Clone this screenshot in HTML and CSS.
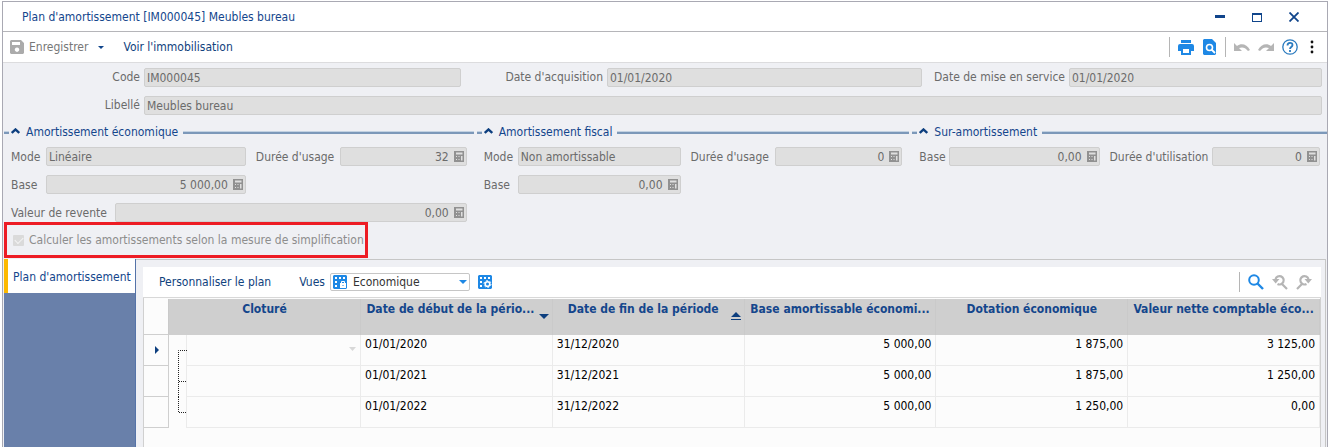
FILE: index.html
```html
<!DOCTYPE html>
<html lang="fr">
<head>
<meta charset="utf-8">
<title>Plan d'amortissement</title>
<link rel="stylesheet" href="styles.css">
</head>
<body>
<svg class="defs" width="0" height="0" aria-hidden="true">
  <symbol id="calc" viewBox="0 0 10 11">
    <path fill="#919191" fill-rule="evenodd" d="M0 0h10v11H0zM2 1.500v2h6.500v-2zM2 5v1h1V5zM4.500 5v1h1V5zM7 5v4.500h1.500V5zM2 8v1h1V8zM4.500 8v1h1V8z"/>
  </symbol>
  <symbol id="chev" viewBox="0 0 9 6">
    <path d="M.8 5 4.500 1.500 8.200 5" fill="none" stroke="#0d3f7f" stroke-width="2.400"/>
  </symbol>
</svg>
<div class="window">
  <header class="titlebar">
    <h1 class="title">Plan d'amortissement [IM000045] Meubles bureau</h1>
    <div class="winbtns">
      <button class="icon" aria-label="Réduire"><svg width="10" height="10"><path fill="#10458b" d="M0 3h10v3H0z"/></svg></button>
      <button class="icon" aria-label="Agrandir"><svg width="10" height="10"><path fill="#10458b" fill-rule="evenodd" d="M0 1h10v9H0zM1 3v6h8V3z"/></svg></button>
      <button class="icon" aria-label="Fermer"><svg width="10" height="10"><path stroke="#10458b" stroke-width="1.800" d="M.5.5l9 9M9.500.5l-9 9"/></svg></button>
    </div>
  </header>
  <nav class="toolbar">
    <button class="tool disabled">
      <svg width="14" height="14"><path fill="#ababab" fill-rule="evenodd" d="M1 0h10l3 3v10l-1 1H1l-1-1V1zM2 2v3h8V2zM7 7.500a2.200 2.200 0 1 0 .01 0z"/></svg>
      <span>Enregistrer</span>
      <svg class="drop" width="6" height="3"><path fill="#10458b" d="M0 0h6L3 3z"/></svg>
    </button>
    <button class="tool link">Voir l'immobilisation</button>
    <div class="tools">
      <span class="sep"></span>
      <button class="icon" aria-label="Imprimer"><svg width="16" height="15"><path fill="#1e88e5" fill-rule="evenodd" d="M3 0h10v3H3zM2 4h12q2 0 2 2v5h-3v4H3v-4H0V6q0-2 2-2zM5 9v4h6V9z"/></svg></button>
      <button class="icon" aria-label="Aperçu"><svg width="13" height="16"><path fill="#1e88e5" d="M1 0h8l4 4v11l-1 1H1l-1-1V1z"/><circle cx="6.500" cy="8.500" r="3" fill="none" stroke="#fff" stroke-width="1.600"/><path stroke="#fff" stroke-width="1.800" d="M8.500 10.500l3.500 3.500"/></svg></button>
      <span class="sep"></span>
      <button class="icon" aria-label="Annuler"><svg width="16" height="9"><path fill="#b5b5b5" d="M0 0l3 3C7 0 13 1 16 7l-2 1C11 4 8 4 5 5l3 3H0z"/></svg></button>
      <button class="icon" aria-label="Rétablir"><svg width="16" height="9"><path fill="#b5b5b5" d="M16 0l-3 3C9 0 3 1 0 7l2 1C5 4 8 4 11 5L8 8h8z"/></svg></button>
      <button class="icon" aria-label="Aide"><svg width="16" height="16" fill="none" stroke="#2b7bbf"><circle cx="8" cy="8" r="7.200" stroke-width="1.300"/><path stroke-width="1.800" d="M5.500 6.500C5.500 3 10.500 3 10.500 6c0 2-2.500 2-2.500 4M8 11v2"/></svg></button>
      <button class="icon" aria-label="Plus"><svg width="4" height="14"><circle cx="2" cy="2" r="1.400" fill="#111"/><circle cx="2" cy="7" r="1.400" fill="#111"/><circle cx="2" cy="12" r="1.400" fill="#111"/></svg></button>
    </div>
  </nav>
  <main class="form">
    <div class="ident">
      <label for="code">Code</label><div class="field"><input id="code" value="IM000045" disabled></div>
      <label for="acq">Date d'acquisition</label><div class="field"><input id="acq" value="01/01/2020" disabled></div>
      <label for="serv">Date de mise en service</label><div class="field"><input id="serv" value="01/01/2020" disabled></div>
      <label for="lib">Libellé</label><div class="field wide"><input id="lib" value="Meubles bureau" disabled></div>
    </div>
    <div class="groups">
      <section class="group">
        <h2 class="legend"><svg width="9" height="6"><use href="#chev"/></svg>Amortissement économique</h2>
        <div class="fields eco">
          <label for="m1">Mode</label><div class="field"><input id="m1" value="Linéaire" disabled></div>
          <label for="d1">Durée d'usage</label><div class="field"><input class="num" id="d1" value="32" disabled><svg width="10" height="11"><use href="#calc"/></svg></div>
          <label for="b1">Base</label><div class="field"><input class="num" id="b1" value="5 000,00" disabled><svg width="10" height="11"><use href="#calc"/></svg></div>
        </div>
        <div class="resale">
          <label for="v1">Valeur de revente</label><div class="field"><input class="num" id="v1" value="0,00" disabled><svg width="10" height="11"><use href="#calc"/></svg></div>
        </div>
      </section>
      <section class="group">
        <h2 class="legend"><svg width="9" height="6"><use href="#chev"/></svg>Amortissement fiscal</h2>
        <div class="fields fisc">
          <label for="m2">Mode</label><div class="field"><input id="m2" value="Non amortissable" disabled></div>
          <label for="d2">Durée d'usage</label><div class="field"><input class="num" id="d2" value="0" disabled><svg width="10" height="11"><use href="#calc"/></svg></div>
          <label for="b2">Base</label><div class="field"><input class="num" id="b2" value="0,00" disabled><svg width="10" height="11"><use href="#calc"/></svg></div>
        </div>
      </section>
      <section class="group">
        <h2 class="legend"><svg width="9" height="6"><use href="#chev"/></svg>Sur-amortissement</h2>
        <div class="fields sur">
          <label for="b3">Base</label><div class="field"><input class="num" id="b3" value="0,00" disabled><svg width="10" height="11"><use href="#calc"/></svg></div>
          <label for="d3">Durée d'utilisation</label><div class="field"><input class="num" id="d3" value="0" disabled><svg width="10" height="11"><use href="#calc"/></svg></div>
        </div>
      </section>
    </div>
    <label class="simplify"><input type="checkbox" checked disabled>Calculer les amortissements selon la mesure de simplification</label>
  </main>
  <div class="lower">
    <aside class="tabs"><button class="tab">Plan d'amortissement</button></aside>
    <section class="plan">
      <div class="planbar">
        <button class="tool link">Personnaliser le plan</button>
        <label class="views" for="vues">Vues</label>
        <div class="combo">
          <svg width="14" height="14"><path fill="#1e88e5" d="M1 0h12l1 1v12l-1 1H1l-1-1V1z"/><path fill="#fff" d="M2 2h2v2H2zM6 2h2v2H6zM10 2h2v2h-2zM2 6h2v2H2zM2 10h2v2H2z"/><path fill="#fff" d="M7 8h6v5H7z"/><path fill="none" stroke="#fff" d="M8.500 8V6.500h3V8"/><path fill="#1e88e5" d="M9.500 10h1v1h-1z"/></svg>
          <select id="vues"><option>Economique</option></select>
          <svg width="8" height="4"><path fill="#1e88e5" d="M0 0h8L4 4z"/></svg>
        </div>
        <button class="icon" aria-label="Configurer la vue"><svg width="14" height="14"><path fill="#1e88e5" d="M1 0h12l1 1v12l-1 1H1l-1-1V1z"/><path fill="#fff" d="M2 2h2v2H2zM6 2h2v2H6zM10 2h2v2h-2zM2 6h2v2H2zM2 10h2v2H2z"/><circle cx="9.500" cy="9" r="2.300" fill="none" stroke="#fff" stroke-width="1.600"/><circle cx="9.500" cy="9" r="3.500" fill="none" stroke="#fff" stroke-dasharray="1.800 1.870"/></svg></button>
        <div class="search">
          <span class="sep"></span>
          <button class="icon" aria-label="Rechercher"><svg width="16" height="16" fill="none" stroke="#1e88e5" stroke-width="2"><circle cx="6" cy="6" r="4.800"/><path stroke-width="2.400" d="M9.500 9.500l5.500 5.500"/></svg></button>
          <button class="icon" aria-label="Précédent"><svg width="16" height="16" fill="none" stroke="#b5b5b5" stroke-width="2.200"><path d="M3.500 5a4.200 4.200 0 1 1 2 5M10 10l5 5"/><path fill="#b5b5b5" stroke="none" d="M0 5h7.500L3.700 9.500z"/></svg></button>
          <button class="icon" aria-label="Suivant"><svg width="16" height="16" fill="none" stroke="#b5b5b5" stroke-width="2.200"><path d="M12.500 5a4.200 4.200 0 1 0-2 5M6 10l-5 5"/><path fill="#b5b5b5" stroke="none" d="M16 5H8.500l3.800 4.500z"/></svg></button>
        </div>
      </div>
      <div class="gridbox">
        <table class="grid">
          <colgroup><col class="c-sel"><col class="c-tree"><col class="c-clo"><col><col><col><col><col></colgroup>
          <thead><tr>
            <th class="corner"></th><th colspan="2">Cloturé</th>
            <th class="sort">Date de début de la pério...<svg width="10" height="8"><path fill="#0d3f7f" d="M0 2h10L5 7z"/></svg></th>
            <th class="sort asc">Date de fin de la période<svg width="10" height="8"><path fill="#0d3f7f" d="M0 5l5-5 5 5zM0 7h10v1H0z"/></svg></th>
            <th>Base amortissable économi...</th><th>Dotation économique</th><th>Valeur nette comptable éco...</th>
          </tr></thead>
          <tbody>
            <tr><td class="sel"><svg width="4" height="8"><path fill="#0d3f7f" d="M0 0l4 4-4 4z"/></svg></td>
              <td class="tree"><svg width="18" height="31"><path fill="none" stroke="#222" stroke-dasharray="1 1" d="M18 15.500H9.500V31"/></svg></td>
              <td class="clo"><svg width="7" height="4"><path fill="#d8d8d8" d="M0 0h7L3.500 4z"/></svg></td>
              <td>01/01/2020</td><td>31/12/2020</td><td class="r">5 000,00</td><td class="r">1 875,00</td><td class="r">3 125,00</td></tr>
            <tr><td class="sel"></td>
              <td class="tree"><svg width="18" height="31"><path fill="none" stroke="#222" stroke-dasharray="1 1" d="M9.500 0V31M10 15.500H18"/></svg></td>
              <td></td>
              <td>01/01/2021</td><td>31/12/2021</td><td class="r">5 000,00</td><td class="r">1 875,00</td><td class="r">1 250,00</td></tr>
            <tr><td class="sel"></td>
              <td class="tree"><svg width="18" height="31"><path fill="none" stroke="#222" stroke-dasharray="1 1" d="M9.500 0V15.500H18"/></svg></td>
              <td></td>
              <td>01/01/2022</td><td>31/12/2022</td><td class="r">5 000,00</td><td class="r">1 250,00</td><td class="r">0,00</td></tr>
          </tbody>
        </table>
      </div>
    </section>
  </div>
</div>
</body>
</html>
```
FILE: styles.css
```css
* { box-sizing: border-box; }
body, input, button, select, table {
  font-family: "DejaVu Sans Condensed", "DejaVu Sans", "Noto Sans", sans-serif;
  font-stretch: condensed;
  font-size: 12px;
  line-height: 16px;
}
body { margin: 0; padding: 1px 4px 0 2px; background: #fff; color: #6b6b6b; }
svg { display: block; flex: none; }
.defs { position: absolute; }
button { border: 0; background: none; padding: 0; color: inherit; }
.window {
  min-height: calc(100vh - 1px);
  display: flex;
  flex-direction: column;
  border: 1px solid #a9a9b3;
  border-bottom: 0;
  background: #eff0f4;
}
.titlebar, .toolbar {
  display: flex;
  align-items: center;
  background: #fff;
}
.titlebar { height: 30px; padding: 0 28px 0 19px; border-bottom: 1px solid #b5b5b9; }
.title { margin: 0; font-size: 12px; font-weight: 400; color: #14468c; }
.winbtns { display: flex; gap: 27px; margin-left: auto; }
.toolbar { height: 31px; padding: 0 12px 0 7px; border-bottom: 1px solid #dcdcde; }
.tool { display: flex; align-items: center; gap: 5px; color: #10427d; white-space: nowrap; }
.disabled { color: #777; }
.drop { margin-left: 5px; }
.disabled + .link { margin-left: 19px; }
.tools, .search { display: flex; align-items: center; gap: 8px; margin-left: auto; }
.sep { width: 1px; height: 20px; background: #b5b5b5; }
.tools { gap: 8px; padding-right: 1px; }
.tools .icon:nth-child(3) { margin: 0 1px; }
.tools .icon:last-child { margin-left: 4px; }

.form { border-left: 1px solid #eff0f4; }
.ident {
  display: grid;
  grid-template-columns: 136px 317fr 138px 315fr 139px 253fr;
  column-gap: 4px;
  row-gap: 9px;
  padding: 5px 5px 0 0;
  margin-bottom: 9px;
}
.ident label { text-align: right; line-height: 19px; white-space: nowrap; }
.wide { grid-column: 2 / -1; }
.field {
  display: flex;
  align-items: center;
  min-width: 0;
  height: 19px;
  padding-right: 2px;
  border: 1px solid #cfcfcf;
  border-radius: 2px;
  background: #dfdfdf;
}
.field input {
  flex: 1;
  min-width: 0;
  width: 0;
  padding: 0 2px;
  border: 0;
  background: none;
  color: #6b6b6b;
}
.field .num { text-align: right; padding-right: 5px; }
.groups { display: grid; grid-template-columns: 469fr 432fr 414fr; column-gap: 3px; }
.legend {
  display: flex;
  align-items: center;
  gap: 5px;
  margin: 0 0 7px;
  font-size: 12px;
  font-weight: 400;
  color: #14468c;
  white-space: nowrap;
}
.legend svg { margin: 0 1px 3px -3px; }
.legend::before, .legend::after {
  content: "";
  width: 5px;
  height: 2px;
  background: #7c98b9;
  border-top: 1px solid #c3d2e2;
}
.legend::after { flex: 1; }
.fields, .resale {
  display: grid;
  row-gap: 9px;
  align-items: center;
  padding: 0 7px;
}
.fields label, .resale label { white-space: nowrap; }
.eco { grid-template-columns: 35px 200fr 94px 127fr; }
.fisc { grid-template-columns: 34px 163fr 94px 128fr; }
.sur { grid-template-columns: 30px 151fr 112px 109fr; }
.fields label:nth-of-type(2) { padding-left: 10px; }
.resale { grid-template-columns: 104px 1fr; margin-top: 9px; }
.simplify {
  display: flex;
  align-items: center;
  gap: 5px;
  width: max-content;
  height: 36px;
  padding: 0 1px 0 6px;
  border: 3px solid #ed1c24;
  color: #8d8d8d;
}
.simplify input {
  appearance: none;
  width: 11px;
  height: 11px;
  margin: 0;
  background: #dadada;
  border-radius: 1px;
  display: grid;
  place-items: center;
}
.simplify input::after {
  content: "";
  width: 7px;
  height: 4px;
  margin-bottom: 2px;
  border: solid #f4f4f4;
  border-width: 0 0 1px 1px;
  rotate: -45deg;
}

.lower { flex: 1; display: flex; margin: 1px 1px 0; }
.tabs { width: 132px; background: #6980aa; border-right: 1px solid #5573a8; }
.tab {
  width: 100%;
  height: 34px;
  padding: 1px 0 0 5px;
  border-left: 4px solid #fdb900;
  background: #fff;
  color: #14468c;
  text-align: left;
  white-space: nowrap;
}
.plan {
  flex: 1;
  min-width: 0;
  display: flex;
  flex-direction: column;
  padding: 7px 4px 0 7px;
  border-top: 1px solid #c6c6c6;
  border-right: 1px solid #c6c6c6;
}
.planbar {
  display: flex;
  align-items: center;
  height: 31px;
  padding: 0 9px 0 16px;
  background: #fff;
  border-bottom: 1px solid #d8d8d8;
}
.views { margin-left: 28px; color: #10427d; }
.combo {
  display: flex;
  align-items: center;
  width: 140px;
  height: 18px;
  margin: 0 8px 0 5px;
  padding: 0 2px;
  border: 1px solid #c6c6c6;
  border-radius: 2px;
}
.combo select {
  appearance: none;
  flex: 1;
  min-width: 0;
  padding: 0 0 0 6px;
  border: 0;
  background: none;
  color: #333;
}
.gridbox { flex: 1; padding-top: 1px; background: #fcfcfc; border: solid #d0d0d0; border-width: 0 1px; }
.grid { width: 100%; table-layout: fixed; border-collapse: separate; border-spacing: 0; color: #000; }
.c-sel { width: 25px; }
.c-tree { width: 18px; }
.c-clo { width: 174px; }
th {
  height: 36px;
  padding: 2px 4px;
  vertical-align: top;
  white-space: nowrap;
  background: #cfcfcf;
  border-right: 1px solid #cacaca;
  color: #14468c;
}
.sort { position: relative; padding-right: 16px; }
.asc { padding-right: 14px; }
.sort svg { position: absolute; right: 3px; top: 13px; }
.corner { background: #fcfcfc; border-bottom: 1px solid #cfcfcf; }
td {
  height: 31px;
  padding: 1px 4px 0;
  vertical-align: top;
  border-right: 1px solid #ebebeb;
  border-bottom: 1px solid #ebebeb;
}
.r { text-align: right; }
.sel { padding: 11px; border-color: #cfcfcf; }
.tree { padding: 0; height: 31px; border-bottom: 0; }
.tree svg { margin-right: -1px; }
.clo { padding: 12px 4px; }
.clo svg { margin-left: auto; }
```
